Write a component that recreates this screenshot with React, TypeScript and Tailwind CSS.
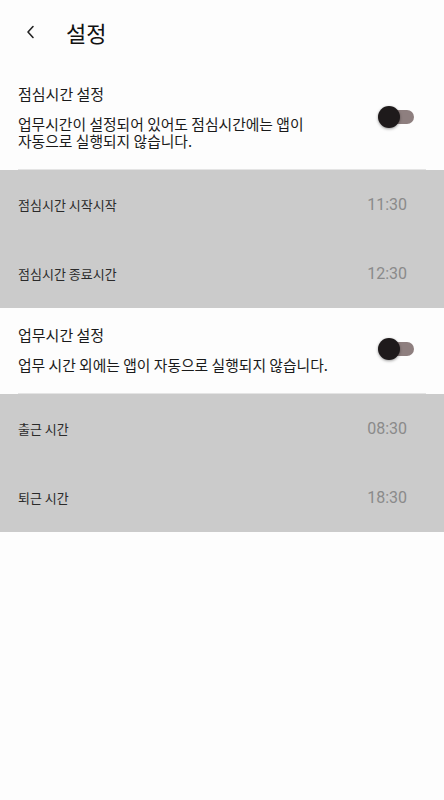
import React from "react";

const font = { fontFamily: '"Noto Sans CJK KR", "Noto Sans", sans-serif' };

function Toggle() {
  return (
    <div className="relative w-[34px] h-[24px] flex items-center shrink-0">
      <div className="absolute left-[4px] right-0 h-[14px] rounded-full bg-[#8e7f7f]" />
      <div className="absolute left-[-2px] w-[22px] h-[22px] rounded-full bg-[#1e1a1b] shadow-[0_1px_3px_rgba(0,0,0,0.4)]" />
    </div>
  );
}

function Section({ title, lines, pt }: { title: string; lines: string[]; pt: string }) {
  return (
    <div className={`bg-[#fdfdfd] ${pt}`}>
      <div className="flex items-center pl-[18px] pr-[30px]">
        <div className="flex-1">
          <div className="text-[15px] leading-[20px] text-[#1a1a1a]">{title}</div>
          <div className="mt-[11px] text-[14.8px] leading-[17px] text-[#1a1a1a]">
            {lines.map((l, i) => (
              <div key={i}>{l}</div>
            ))}
          </div>
        </div>
        <Toggle />
      </div>
      <div className="mx-[18px] mt-[20px] h-px bg-[#e4e4e4]" />
    </div>
  );
}

function Row({ label, time }: { label: string; time: string }) {
  return (
    <div className="h-[69px] flex items-center justify-between pl-[18px] pr-[37px]">
      <span className="text-[13px] text-[#2a2a2a]">{label}</span>
      <span className="text-[16px] text-[#8a8a8a]" style={{ fontFamily: "Roboto, sans-serif" }}>
        {time}
      </span>
    </div>
  );
}

export default function App() {
  return (
    <div className="w-[444px] h-[800px] bg-[#fdfdfd] flex flex-col" style={font}>
      <div className="h-[64px] flex items-center">
        <div className="w-[66px] flex items-center pl-[25px]">
          <svg width="12" height="14" viewBox="0 0 12 14" fill="none">
            <path d="M8 1.5 L3 7 L8 12.5" stroke="#222" strokeWidth="1.6" strokeLinecap="round" strokeLinejoin="round" />
          </svg>
        </div>
        <span className="text-[22px] text-[#111] leading-none">설정</span>
      </div>
      <Section
        pt="pt-[20px]"
        title="점심시간 설정"
        lines={["업무시간이 설정되어 있어도 점심시간에는 앱이", "자동으로 실행되지 않습니다."]}
      />
      <div className="bg-[#cbcbcb]">
        <Row label="점심시간 시작시작" time="11:30" />
        <Row label="점심시간 종료시간" time="12:30" />
      </div>
      <Section pt="pt-[17px]" title="업무시간 설정" lines={["업무 시간 외에는 앱이 자동으로 실행되지 않습니다."]} />
      <div className="bg-[#cbcbcb]">
        <Row label="출근 시간" time="08:30" />
        <Row label="퇴근 시간" time="18:30" />
      </div>
    </div>
  );
}
